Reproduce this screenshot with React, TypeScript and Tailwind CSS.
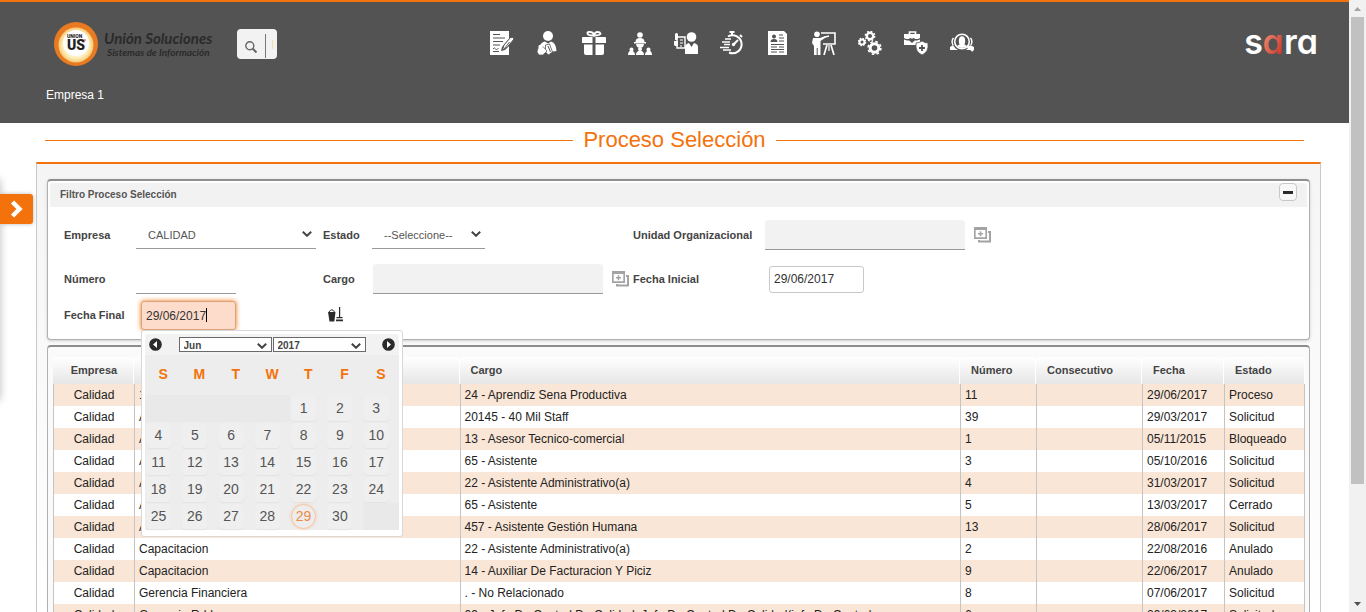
import React from "react";

const rows = [
  ["Calidad", "1", "24 - Aprendiz Sena Productiva", "11", "", "29/06/2017", "Proceso"],
  ["Calidad", "A", "20145 - 40 Mil Staff", "39", "", "29/03/2017", "Solicitud"],
  ["Calidad", "A", "13 - Asesor Tecnico-comercial", "1", "", "05/11/2015", "Bloqueado"],
  ["Calidad", "A", "65 - Asistente", "3", "", "05/10/2016", "Solicitud"],
  ["Calidad", "A", "22 - Asistente Administrativo(a)", "4", "", "31/03/2017", "Solicitud"],
  ["Calidad", "A", "65 - Asistente", "5", "", "13/03/2017", "Cerrado"],
  ["Calidad", "A", "457 - Asistente Gestión Humana", "13", "", "28/06/2017", "Solicitud"],
  ["Calidad", "Capacitacion", "22 - Asistente Administrativo(a)", "2", "", "22/08/2016", "Anulado"],
  ["Calidad", "Capacitacion", "14 - Auxiliar De Facturacion Y Piciz", "9", "", "22/06/2017", "Anulado"],
  ["Calidad", "Gerencia Financiera", ". - No Relacionado", "8", "", "07/06/2017", "Solicitud"],
  ["Calidad", "Gerencia Rrhh", "09 - Jefe De Control De Calidad, Jefe De Control De Calidad(jefe De Control", "6", "", "29/03/2017", "Solicitud"],
];

const weeks: (number | null)[][] = [
  [null, null, null, null, 1, 2, 3],
  [4, 5, 6, 7, 8, 9, 10],
  [11, 12, 13, 14, 15, 16, 17],
  [18, 19, 20, 21, 22, 23, 24],
  [25, 26, 27, 28, 29, 30, null],
];

const dark = "#535353";

const menu: { name: string; art: React.ReactNode }[] = [
  {
    name: "Contratos",
    art: (
      <>
        <path d="M0 0h19v8l-7 8-1 4 4-1 4-4v9H0z" />
        <path d="M3 3.500h7M3 7h12M3 10.500h10M3 14h7M3 20.500h6" stroke={dark} strokeWidth="1.200" />
        <path d="M3 18q1.500-2 2.500 0t3-1" stroke={dark} fill="none" />
        <path d="M12.500 19l1.500-5 6.500-7.500q3-1 3.500 1.500l-7 8.500z" stroke={dark} />
        <path d="M14.500 17.500l5-6.500" stroke={dark} />
      </>
    ),
  },
  {
    name: "Empleados",
    art: (
      <>
        <circle cx="12" cy="5" r="5" />
        <path d="M4 15q1-4 5-4.500l3 2 3-2q5 1 5.500 9.500l-6 1-8-2z" />
        <path d="M9.500 14l4-1 3 8-4 3-3-3z" stroke={dark} strokeWidth=".8" />
        <path d="M2 17h3l2-1.500 4 4.500-4 4H3l-2-3z" stroke={dark} strokeWidth=".7" />
        <circle cx="4.500" cy="16" r="2.200" />
        <path d="M12 15l2.500 6" stroke={dark} />
      </>
    ),
  },
  {
    name: "Beneficios",
    art: (
      <>
        <path d="M1 6h9.500v6H0V7q0-1 1-1zM13.500 6H23q1 0 1 1v5H13.500zM2 13.500h8.500V24H4q-2 0-2-2zM13.500 13.500H22V22q0 2-2 2h-6.500z" />
        <path d="M11 4.500Q6 4.500 5.500 2.500T8.500 1Q11 1 12 4q1-3 3.500-3t3 1.500-5.500 2z" fill="none" stroke="white" strokeWidth="1.800" />
      </>
    ),
  },
  {
    name: "Organigrama",
    art: (
      <>
        <circle cx="12" cy="4" r="2.800" />
        <path d="M7.500 11q0-4 4.500-4t4.500 4H18v1.500H6V11z" />
        <path d="M8 13h8l-1 3-3 1-3-1zM0 24q0-4 3-4.500 4 .5 4 4.500zM8 24q0-4 4-4.500 4 .5 4 4.500zM17 24q0-4 4-4.500 3 .5 3 4.500z" />
        <circle cx="3.500" cy="18.500" r="2" />
        <circle cx="12" cy="18" r="2" />
        <circle cx="20.500" cy="18.500" r="2" />
      </>
    ),
  },
  {
    name: "Selección",
    art: (
      <>
        <circle cx="17.500" cy="6" r="4.800" />
        <path d="M11 23v-8q2-3 4-3l2.500 4 2.500-4q4 1 4 4v7z" />
        <path d="M3 6h8v11H3z" fill="none" stroke="white" strokeWidth="1.400" />
        <path d="M6 9h3M6 12h3M6 15h2" stroke="white" />
        <path d="M0 10h4v5H1l-1-1zM1 3q1.500-2 3 0v4l-1 2H1z" />
      </>
    ),
  },
  {
    name: "Tiempos",
    art: (
      <>
        <path d="M8 5.500A9 9 0 1 1 9 21.500" fill="none" stroke="white" strokeWidth="2" />
        <path d="M12 4V1M9.500 1h5M20 4l2 2" stroke="white" strokeWidth="2" />
        <path d="M5 8h6M2 11h8M4 13.500h6M0 16.500h9M3 19h8" stroke="white" strokeWidth="1.300" />
        <path d="M13 14l5-5" stroke="white" strokeWidth="2" />
        <circle cx="13.500" cy="13.500" r="1.700" />
      </>
    ),
  },
  {
    name: "Hoja de vida",
    art: (
      <>
        <path d="M2 0h16l3 3v21H2z" />
        <circle cx="8" cy="5.500" r="2" fill={dark} />
        <path d="M4.500 11q0-3 3.500-3t3.500 3z" fill={dark} />
        <path d="M13 4h4M13 7h5M13 10h5M5 13.500h13M5 16h6M13 16h5M5 18.500h13M5 21h6M13 21h5" stroke={dark} strokeWidth="1.200" />
      </>
    ),
  },
  {
    name: "Capacitación",
    art: (
      <>
        <circle cx="5" cy="3.200" r="2.800" />
        <path d="M1 7h7l5-2 .7 1.500L8.500 10v14H5.700v-7h-1v7H2v-9l-2-3z" />
        <path d="M9 2h14v11H11" fill="none" stroke="white" strokeWidth="1.600" />
        <path d="M13 6l4-1M15 14l-3 10M19 14l3 10" stroke="white" strokeWidth="1.700" />
        <path d="M17 14v6" stroke="white" strokeWidth="1.200" />
      </>
    ),
  },
  {
    name: "Procesos",
    art: (
      <>
        <circle cx="12" cy="5" r="3.200" fill="none" stroke="white" strokeWidth="2.400" />
        <circle cx="12" cy="5" r="4.700" fill="none" stroke="white" strokeWidth="1.400" strokeDasharray="1.800 1.900" />
        <circle cx="4" cy="11" r="2.500" fill="none" stroke="white" strokeWidth="2" />
        <circle cx="4" cy="11" r="3.700" fill="none" stroke="white" strokeWidth="1.200" strokeDasharray="1.500 1.400" />
        <circle cx="16.500" cy="17" r="4.300" fill="none" stroke="white" strokeWidth="3" />
        <circle cx="16.500" cy="17" r="6.400" fill="none" stroke="white" strokeWidth="1.600" strokeDasharray="2.600 2.430" />
      </>
    ),
  },
  {
    name: "Salud ocupacional",
    art: (
      <>
        <path d="M5.500 3V1h6v2" fill="none" stroke="white" strokeWidth="1.700" />
        <path d="M0 3h16v4l-2 1H2L0 7zM0 8.500l3 1h10l3-1V14H0z" />
        <path d="M5 8q1.500-2 3 0 1.500-2 3 0 0 2-3 4-3-2-3-4z" fill={dark} />
        <path d="M18 10q3 2 6 2 1 9-6 12-7-3-6-12 3 0 6-2z" stroke={dark} strokeWidth=".8" />
        <path d="M18 14v6M15 17h6" stroke={dark} strokeWidth="1.800" />
      </>
    ),
  },
  {
    name: "Consultas",
    art: (
      <>
        <circle cx="12" cy="10.500" r="7.300" fill="none" stroke="white" strokeWidth="1.600" />
        <ellipse cx="12" cy="10" rx="3.200" ry="4.800" />
        <path d="M7 15q2-2 5-2t5 2q-5 4-10 0zM0 19v-3l3-2q2 4 5 5zM24 19v-3l-4-2-2 3-2 2z" />
        <path d="M17.500 15.500L23 20" stroke="white" strokeWidth="2.200" />
        <path d="M3.500 7Q1 10 3 14M20.500 7q2.500 3 .5 7" fill="none" stroke="white" strokeWidth="1.500" />
      </>
    ),
  },
];

function Chevron() {
  return (
    <svg aria-hidden="true" viewBox="0 0 10 6" className="pointer-events-none h-[6px] w-[10px] shrink-0" fill="none" stroke="#444" strokeWidth="2">
      <path d="M.8.8 5 4.800 9.200.8" />
    </svg>
  );
}

function SelectBox({ id, text, box, label }: { id: string; text: string; box: string; label?: string }) {
  return (
    <div className={`grid items-center ${box}`}>
      <select id={id} aria-label={label} className="col-start-1 row-start-1 h-full w-full appearance-none bg-transparent outline-none">
        <option>{text}</option>
      </select>
      <div className="pointer-events-none col-start-1 row-start-1 flex justify-end pr-[4px]">
        <Chevron />
      </div>
    </div>
  );
}

function PickerButton({ label }: { label: string }) {
  return (
    <button type="button" aria-label={label} className="ml-[9px] h-4 w-[17px]">
      <svg viewBox="0 0 17 16" className="h-4 w-[17px]" fill="none" stroke="#a3a3a3">
        <path d="M.8 1.500h11.400v9.700H.8z" strokeWidth="1.700" />
        <path d="M0 1.500h13" strokeWidth="3" />
        <path d="M6.500 4.200v5M4 6.700h5" strokeWidth="1.500" />
        <path d="M14 5h2v9.500H5V13" strokeWidth="2" />
      </svg>
    </button>
  );
}

function ArrowButton({ label, d }: { label: string; d: string }) {
  return (
    <button type="button" aria-label={label} className="h-[13px] w-[13px]">
      <svg viewBox="0 0 13 13" className="h-[13px] w-[13px]">
        <circle cx="6.500" cy="6.500" r="6.300" fill="#2b2b2b" />
        <path d={d} fill="white" />
      </svg>
    </button>
  );
}

function Calendar() {
  return (
    <div className="absolute top-[29px] left-0 z-10 w-[262px] rounded-[3px] border border-[#d8d8d8] bg-white px-[3px] pt-[3px] pb-[6px]">
      <div className="flex h-[21px] items-center justify-between rounded-[3px] bg-[#f2f2f2] px-1">
        <ArrowButton label="Anterior" d="M8 3v7L4 6.500z" />
        <div className="flex gap-px text-[10px] font-bold text-[#444]">
          <SelectBox id="mes" label="Mes" text="Jun" box="h-[15px] w-[93px] border border-[#6a6a6a] bg-white [&>select]:pl-1" />
          <SelectBox id="anio" label="Año" text="2017" box="h-[15px] w-[93px] border border-[#6a6a6a] bg-white [&>select]:pl-1" />
        </div>
        <ArrowButton label="Siguiente" d="M5 3v7l4-3.500z" />
      </div>
      <table className="w-full table-fixed border-collapse bg-[#ededed]">
        <thead>
          <tr className="h-10 text-[14px] text-[#f4720b]">
            {["S", "M", "T", "W", "T", "F", "S"].map((d, i) => (
              <th key={i} className="p-0 pb-[2px] font-bold">{d}</th>
            ))}
          </tr>
        </thead>
        <tbody>
          {weeks.map((w, i) => (
            <tr key={i} className="h-[27px]">
              {w.map((d, j) => (
                <td key={j} className={d ? "p-px" : "bg-[#e9e9e9] p-px"}>
                  {d && (
                    <button
                      type="button"
                      className={
                        d === 29
                          ? "block h-[25px] w-[25px] rounded-full border border-[#f5c3a0] text-[14px] leading-[23px] text-[#f08a45] shadow-[0_0_3px_#f7c9a8]"
                          : "block h-[25px] w-[25px] rounded-[4px] bg-[#efefef] text-[14px] leading-[25px] text-[#555] shadow-[0_1px_1px_#e3e3e3]"
                      }
                    >
                      {d}
                    </button>
                  )}
                </td>
              ))}
            </tr>
          ))}
        </tbody>
      </table>
    </div>
  );
}

function Header() {
  return (
    <header className="h-[123px] border-t-2 border-[#f4720b] bg-[#535353]">
      <div className="flex h-[84px] items-center pr-[31px] pl-[53px]">
        <svg viewBox="0 0 46 46" className="h-[46px] w-[46px]" role="img" aria-label="Unión Soluciones">
          <defs>
            <radialGradient id="sun">
              <stop offset=".5" stopColor="#ffffff" />
              <stop offset=".78" stopColor="#fdeab0" />
              <stop offset="1" stopColor="#f6c873" />
            </radialGradient>
          </defs>
          <circle cx="23" cy="23" r="22" fill="#ea7a22" />
          <circle cx="23" cy="24" r="17.500" fill="url(#sun)" />
          <circle cx="23" cy="22" r="13" fill="#fff" />
          <path d="M27 18.500h6v1h-6z" fill="#d93a2b" />
          <text x="14" y="17" fontSize="5" fontWeight="800" fontFamily="Roboto, sans-serif" fill="#222">UNION</text>
          <text x="14" y="29" fontSize="14" fontWeight="900" fontFamily="Roboto, sans-serif" fill="#222">US</text>
        </svg>
        <div className="ml-[5px] w-[112px] font-['Lato',sans-serif] font-bold whitespace-nowrap text-[#2b2a2a] italic">
          <div className="text-[15px] leading-[15px]">Unión Soluciones</div>
          <div className="pl-[3px] text-[10px] leading-[12px]">Sistemas de Información</div>
        </div>
        <div className="ml-[21px] flex h-[30px] w-10 items-center rounded-[4px] bg-[#f2f2f2] pl-2">
          <button type="button" aria-label="Buscar" className="mt-[5px] h-3 w-3">
            <svg viewBox="0 0 12 12" className="h-3 w-3" fill="none" stroke="#666">
              <circle cx="4.800" cy="4.800" r="4" strokeWidth="1.400" />
              <path d="m7.500 7.500 4 4" strokeWidth="2" />
            </svg>
          </button>
          <span className="mt-1 ml-2 h-6 w-px bg-[#777]" />
          <span className="ml-[6px] h-[9px] w-px bg-[#f6dfa0]" />
        </div>
        <nav className="mb-[2px] ml-[213px] flex gap-[22px]">
          {menu.map((m) => (
            <a key={m.name} href="#" aria-label={m.name} className="h-6 w-6">
              <svg viewBox="0 0 24 24" className="h-6 w-6" fill="white">{m.art}</svg>
            </a>
          ))}
        </nav>
        <a href="#" className="mb-1 ml-auto font-['Inter',sans-serif] text-[34px] leading-[40px] font-semibold text-white [font-feature-settings:'cv11']">
          s<span className="bg-linear-to-br from-[#f59a80] to-[#c4161c] bg-clip-text text-transparent">a</span>ra
        </a>
      </div>
      <div className="ml-[46px] text-[12px] leading-[18px] text-white">Empresa 1</div>
    </header>
  );
}

function Filter() {
  const label = "flex items-center font-bold text-[#444]";
  const date = "rounded-[3px] border px-1 text-[12px] text-[#333] outline-none w-[95px]";
  return (
    <section className="rounded-[4px] border border-t-2 border-[#b0b0b0] border-t-[#8f8f8f] bg-white pt-[2px] pb-[9px] shadow-[0_1px_3px_#ccc]">
      <div className="mx-[2px] flex h-6 items-center justify-between rounded-t-[3px] bg-[#f2f2f2] pr-[10px] pl-[10px]">
        <h2 className="pb-[2px] text-[10px] font-bold text-[#555]">Filtro Proceso Selección</h2>
        <button type="button" aria-label="Contraer" className="-mt-[6px] flex h-[18px] w-[18px] items-center justify-center rounded-[4px] border border-[#c8c8c8] bg-[#f8f8f8]">
          <span className="h-[3px] w-[10px] bg-[#2b2b2b]" />
        </button>
      </div>
      <form className="mt-[13px] ml-4 grid grid-cols-[72px_187px_50px_260px_132px_1fr] grid-rows-[44px_37px_29px] text-[11px]">
        <label htmlFor="empresa" className={`${label} h-[30px]`}>Empresa</label>
        <SelectBox id="empresa" text="CALIDAD" box="w-[180px] border-b border-[#999] text-[#555] h-[29px] [&>select]:pl-3 [&>select]:pt-[2px]" />
        <label htmlFor="estado" className={`${label} h-[30px]`}>Estado</label>
        <SelectBox id="estado" text="--Seleccione--" box="-ml-px w-[113px] border-b border-[#999] text-[#555] h-[29px] [&>select]:pl-3 [&>select]:pt-[2px]" />
        <label htmlFor="unidad" className={`${label} h-[30px]`}>Unidad Organizacional</label>
        <div className="flex h-[30px] items-center">
          <input id="unidad" readOnly className="h-[30px] w-[200px] rounded-t-[3px] border-b border-[#999] bg-[#f2f2f2] outline-none" />
          <PickerButton label="Buscar unidad" />
        </div>

        <label htmlFor="numero" className={`${label} h-[30px]`}>Número</label>
        <input id="numero" className="h-[30px] w-[100px] border-b border-[#999] outline-none" />
        <label htmlFor="cargo" className={`${label} h-[30px]`}>Cargo</label>
        <div className="flex h-[30px] items-center">
          <input id="cargo" readOnly className="h-[30px] w-[230px] rounded-t-[3px] border-b border-[#999] bg-[#f2f2f2] outline-none" />
          <PickerButton label="Buscar cargo" />
        </div>
        <label htmlFor="inicial" className={`${label} h-[30px]`}>Fecha Inicial</label>
        <div className="flex h-[30px] items-center pl-1">
          <input id="inicial" defaultValue="29/06/2017" className={`${date} h-[27px] border-[#c8c8c8] bg-white`} />
        </div>

        <label htmlFor="final" className={`${label} h-[28px]`}>Fecha Final</label>
        <div className="relative ml-[5px]">
          <input id="final" defaultValue="29/06/2017" className={`${date} block h-[29px] border-[#d9a37c] bg-[#fddccb] shadow-[0_0_5px_#f4720b]`} />
          <span aria-hidden="true" className="absolute top-[7px] left-[65px] h-[14px] w-px bg-black" />
          <Calendar />
        </div>
        <div className="flex h-[26px] items-center pl-[5px]">
          <button type="button" aria-label="Limpiar" className="h-[15px] w-[15px]">
            <svg viewBox="0 0 15 15" className="h-[15px] w-[15px]" fill="#2b2b2b">
              <path d="M0 5h7.500l-1.200 9.500H1.500z" />
              <path d="M1 5q2.800-4.500 5.500 0" fill="none" stroke="#2b2b2b" />
              <path d="M11 0h1.200v10H11zM8.500 10h6v1.200h-6zM8 12.500h7v1.800H8z" />
            </svg>
          </button>
        </div>
      </form>
    </section>
  );
}

function Results() {
  const heads = ["Empresa", "", "Cargo", "Número", "Consecutivo", "Fecha", "Estado"];
  return (
    <section className="mt-[5px] rounded-[4px] border border-t-2 border-[#b0b0b0] border-t-[#8a8d8a] bg-[#fafafa] pt-[10px] pr-1 pl-[5px]">
      <table className="w-full table-fixed border-separate border-spacing-0 text-left text-[12px] text-[#222]">
        <colgroup>
          <col className="w-[81px]" />
          <col className="w-[26%]" />
          <col />
          <col className="w-[76px]" />
          <col className="w-[106px]" />
          <col className="w-[82px]" />
          <col className="w-[81px]" />
        </colgroup>
        <thead>
          <tr className="h-[27px] text-[11px] text-[#444]">
            {heads.map((h, i) => (
              <th
                key={i}
                className={`rounded-t-[4px] border-r border-white bg-linear-to-b from-white to-[#e6e6e6] py-0 font-bold ${i === 0 ? "pl-[2px] text-center" : "pl-[11px]"}`}
              >
                {h}
              </th>
            ))}
          </tr>
        </thead>
        <tbody>
          {rows.map((r, i) => (
            <tr key={i} className="h-[22px] odd:bg-[#fae6d6] even:bg-white">
              {r.map((c, j) => (
                <td
                  key={j}
                  className={`overflow-hidden border-l border-[#c4c4c4] py-0 whitespace-nowrap last:border-r ${j === 0 ? "text-center" : "pl-1"}`}
                >
                  {c}
                </td>
              ))}
            </tr>
          ))}
        </tbody>
      </table>
    </section>
  );
}

export default function App() {
  return (
    <div className="relative flex h-screen overflow-hidden bg-white font-['Liberation_Sans',Arial,sans-serif]">
      <div className="min-w-0 flex-1">
        <Header />
        <main>
          <div className="mx-[45px] mb-[5px] flex h-[34px] items-center gap-[10px]">
            <span className="h-px flex-1 bg-[#f4720b]" />
            <h1 className="text-[22px] leading-[34px] text-[#f4720b]">Proceso Selección</h1>
            <span className="h-px flex-1 bg-[#f4720b]" />
          </div>
          <div className="mr-7 ml-9 border-x border-t-2 border-[#c8c8c8] border-t-[#f4720b] bg-linear-to-b from-[#f5f5f5] to-white px-[10px] pt-[15px]">
            <Filter />
            <Results />
          </div>
        </main>
      </div>
      <div aria-hidden="true" className="flex w-[17px] shrink-0 flex-col items-center justify-between bg-[#f1f1f1]">
        <svg viewBox="0 0 17 17" className="h-[17px] w-[17px]"><path d="M5 11h7L8.500 7z" fill="#a3a3a3" /></svg>
        <div className="w-[13px] basis-[467px] bg-[#c1c1c1]" />
        <div className="flex-1" />
        <svg viewBox="0 0 17 17" className="h-[17px] w-[17px]"><path d="M5 7h7l-3.500 4z" fill="#505050" /></svg>
      </div>
      <aside className="absolute top-[180px] -left-5 h-[220px] w-5 shadow-[0_0_8px_#bbb]" />
      <button type="button" aria-label="Abrir menú" className="absolute top-[194px] left-0 flex h-[30px] w-[33px] items-center justify-center rounded-r-[3px] bg-[#f4720b] shadow-[0_0_4px_#bbb]">
        <svg viewBox="0 0 14 18" className="h-[18px] w-[14px]" fill="none" stroke="white" strokeWidth="4.500">
          <path d="m2.500 2 7 7-7 7" />
        </svg>
      </button>
    </div>
  );
}
